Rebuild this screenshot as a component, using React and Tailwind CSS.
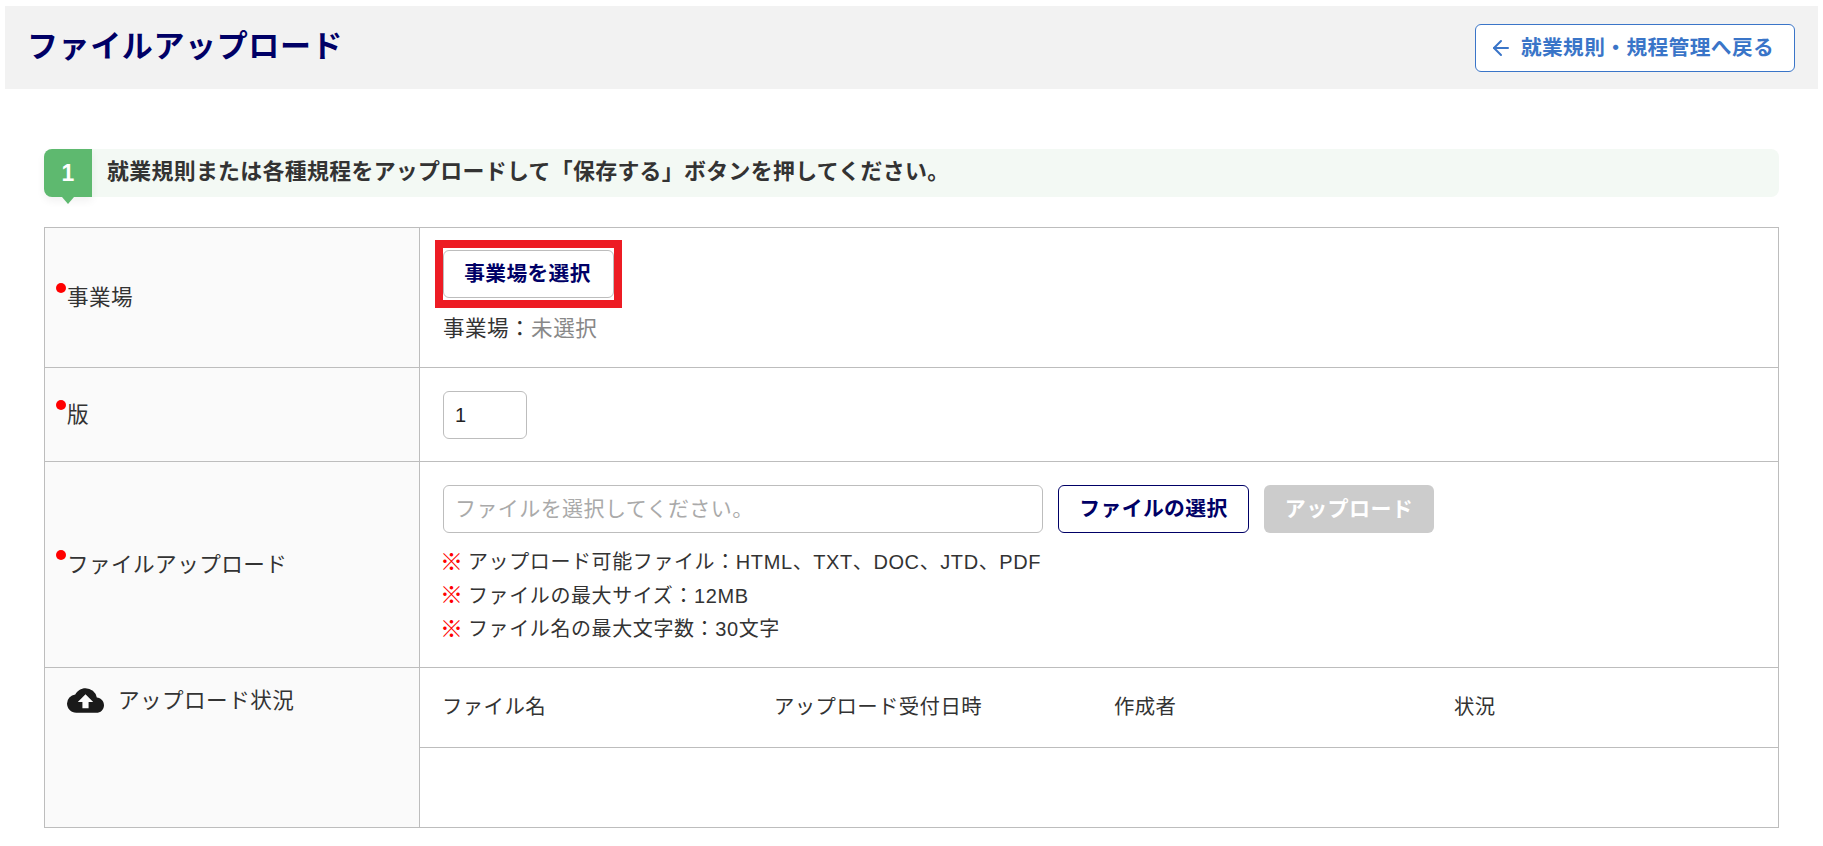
import React from "react";
import { ArrowLeft } from "lucide-react";
import { MdCloudUpload } from "react-icons/md";

const font = "font-['Liberation_Sans','Noto_Sans_CJK_JP',sans-serif]";

function RequiredLabel({ children }) {
  return (
    <div className="w-[375px] shrink-0 bg-[#fafafa] border-r border-[#bdbdbd] flex items-center pl-[11px] pt-[2px] text-[21.6px] tracking-[0.02em] text-[#333]">
      <span className="w-[10px] h-[10px] rounded-full bg-[#f00] mb-[22px] mr-[1px] shrink-0" />
      <span>{children}</span>
    </div>
  );
}

function Note({ children }) {
  return (
    <div className="h-[33.7px] flex items-center text-[20px] tracking-[0.03em] text-[#333]">
      <span className="text-[#f00] font-bold w-[28px] -ml-[3px] shrink-0 tracking-normal text-[23px]">※</span>
      <span>{children}</span>
    </div>
  );
}

export default function App() {
  return (
    <div className={`${font} w-[1823px] h-[846px] overflow-hidden bg-white pt-[6px]`}>
      <header className="mx-[5px] h-[83px] bg-[#f2f2f2] flex items-center justify-between pl-[22px] pr-[23px]">
        <h1 className="text-[31px] font-bold text-[#000066] tracking-[0.02em] leading-none mb-[2px]">ファイルアップロード</h1>
        <button className="w-[320px] h-[48px] bg-white border border-[#3a75c8] rounded-[6px] flex items-center justify-center gap-[8px] pr-[7px] text-[#3a75c8] text-[20.7px] font-bold tracking-[0.02em]">
          <ArrowLeft size={24} strokeWidth={2} />
          <span>就業規則・規程管理へ戻る</span>
        </button>
      </header>

      <div className="mx-[44px] w-[1735px] mt-[60px] h-[48px] bg-[#f3f9f4] rounded-[8px] flex items-center">
        <div className="relative w-[48px] h-[48px] shrink-0 bg-[#5eb96f] rounded-l-[8px] shadow-[0_4px_8px_rgba(0,0,0,0.06)] flex items-center justify-center text-white text-[23px] font-bold">
          1
          <span className="absolute left-[18px] top-full w-0 h-0 border-l-[6px] border-r-[6px] border-t-[7px] border-l-transparent border-r-transparent border-t-[#5eb96f]" />
        </div>
        <p className="ml-[15px] mb-[2px] text-[21.9px] font-bold text-[#333] tracking-[0.015em] whitespace-nowrap">
          就業規則または各種規程をアップロードして「保存する」ボタンを押してください。
        </p>
      </div>

      <div className="mx-[44px] w-[1735px] mt-[30px] border border-[#bdbdbd]">
        <div className="flex h-[140px] border-b border-[#bdbdbd]">
          <RequiredLabel>事業場</RequiredLabel>
          <div className="flex-1 pl-[23px] pt-[22px]">
            <div className="relative w-[171px]">
              <button className="w-[171px] h-[48px] pr-[2px] bg-white border border-[#bdbdbd] rounded-[6px] text-[#000066] text-[20.7px] font-bold tracking-[0.02em]">
                事業場を選択
              </button>
              <div className="absolute top-[-10px] bottom-[-10px] left-[-8px] right-[-8px] border-[8px] border-[#ed1c24] pointer-events-none" />
            </div>
            <p className="mt-[16px] text-[21.6px] tracking-[0.02em] text-[#333] leading-[30px]">
              事業場：<span className="text-[#888]">未選択</span>
            </p>
          </div>
        </div>

        <div className="flex h-[94px] border-b border-[#bdbdbd]">
          <RequiredLabel>版</RequiredLabel>
          <div className="flex-1 pl-[23px] flex items-center">
            <div className="w-[84px] h-[48px] border border-[#bdbdbd] rounded-[6px] bg-white flex items-center pl-[11px] text-[20px] text-[#222]">1</div>
          </div>
        </div>

        <div className="flex h-[206px] border-b border-[#bdbdbd]">
          <RequiredLabel>ファイルアップロード</RequiredLabel>
          <div className="flex-1 pl-[23px] pt-[23px]">
            <div className="flex items-center">
              <div className="w-[600px] h-[48px] border border-[#bdbdbd] rounded-[6px] bg-white flex items-center pl-[11px] text-[21px] text-[#aaa] tracking-[0.02em]">
                ファイルを選択してください。
              </div>
              <button className="ml-[15px] w-[191px] h-[48px] bg-white border border-[#000066] rounded-[6px] text-[#000066] text-[20.8px] font-bold tracking-[0.02em]">
                ファイルの選択
              </button>
              <button className="ml-[15px] w-[170px] h-[48px] bg-[#cccccc] rounded-[6px] text-white text-[21px] font-bold tracking-[0.02em]">
                アップロード
              </button>
            </div>
            <div className="mt-[12px]">
              <Note>アップロード可能ファイル：HTML、TXT、DOC、JTD、PDF</Note>
              <Note>ファイルの最大サイズ：12MB</Note>
              <Note>ファイル名の最大文字数：30文字</Note>
            </div>
          </div>
        </div>

        <div className="flex h-[159px]">
          <div className="w-[375px] shrink-0 bg-[#fafafa] border-r border-[#bdbdbd] flex items-start pl-[22px] pt-[18px] text-[21.6px] tracking-[0.02em] text-[#333]">
            <MdCloudUpload size={37} className="text-[#1a1a1a] shrink-0 mt-[-4px]" />
            <span className="ml-[14px] leading-[30px]">アップロード状況</span>
          </div>
          <div className="flex-1 flex flex-col">
            <div className="h-[80px] border-b border-[#bdbdbd] grid grid-cols-[332px_340px_340px_1fr] pl-[22px] items-center text-[20.4px] tracking-[0.02em] text-[#333]">
              <span>ファイル名</span>
              <span>アップロード受付日時</span>
              <span>作成者</span>
              <span>状況</span>
            </div>
            <div className="flex-1" />
          </div>
        </div>
      </div>
    </div>
  );
}
